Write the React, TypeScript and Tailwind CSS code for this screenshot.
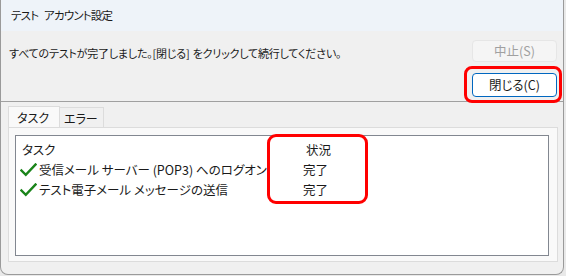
const font = "font-['Segoe_UI','Noto_Sans_CJK_JP',sans-serif] [font-feature-settings:'palt']";

const rows = [
  { task: "受信メール サーバー (POP3) へのログオン", status: "完了" },
  { task: "テスト電子メール メッセージの送信", status: "完了" },
];

function Check() {
  return (
    <svg width="17" height="14" viewBox="0 0 17 14" className="shrink-0">
      <path d="M1.5 7.5 L5.8 11.8 L15.5 1.5" fill="none" stroke="#1a841a" strokeWidth="2.4" strokeLinecap="square" />
    </svg>
  );
}

export default function App() {
  return (
    <div className={`w-[566px] h-[276px] bg-[#e9e9e9] overflow-hidden text-[12px] text-[#1a1a1a] ${font}`}>
      <div className="w-[564px] h-[275px] bg-[#f0f0f0] border border-t-0 border-[#9a9a9a] rounded-b-[8px] flex flex-col">
        <div className="h-[31px] bg-[#eef3f9] flex items-center pl-[10px] text-[11.5px] tracking-[-0.8px] [word-spacing:4px]">テスト アカウント設定</div>

        <div className="flex justify-between pl-[8px] pr-[6px] pt-[9px]">
          <span className="mt-[8px] leading-none text-[11px] tracking-[-0.2px] [word-spacing:1px]">
            すべてのテストが完了しました。[閉じる] をクリックして続行してください。
          </span>
          <div className="flex flex-col gap-[11px]">
            <button className="w-[85px] h-[22px] rounded-[4px] bg-[#f5f5f5] border border-[#e6e6e6] text-[#a0a0a0] text-[12.5px]">
              中止(S)
            </button>
            <div className="relative">
              <button className="w-[85px] h-[24px] rounded-[4px] bg-white border border-[#0067c0] text-[#1a1a1a] text-[12.5px]">
                閉じる(C)
              </button>
              <div className="absolute left-[-8px] top-[-7px] w-[98px] h-[37px] border-[3px] border-[#ff0000] rounded-[8px]" />
            </div>
          </div>
        </div>

        <div className="mt-[4px] border-t border-[#a0a0a0]" />

        <div className="pl-[7px] pr-[6px] pt-[4px]">
          <div className="flex items-end h-[21px]">
            <div className="w-[52px] h-[21px] bg-[#f9f9f9] border border-b-0 border-[#dcdcdc] pl-[8px] pt-[2px]">タスク</div>
            <div className="w-[44px] h-[20px] bg-[#f0f0f0] border border-l-0 border-b-0 border-[#dcdcdc] pl-[4px] pt-[2px]">エラー</div>
          </div>
          <div className="w-[550px] h-[135px] bg-[#f9f9f9] border border-[#dcdcdc] pl-[6px] pr-[8px] pt-[7px] pb-[5px]">
            <div className="relative h-full bg-white border border-[#828790] pl-[6px] pt-[5px] text-[12.5px]">
              <div className="flex h-[19px] items-center">
                <span className="w-[284px]">タスク</span>
                <span>状況</span>
              </div>
              {rows.map((r) => (
                <div key={r.task} className="flex h-[20px] items-center">
                  <div className="w-[284px] flex items-center gap-[2px] -ml-[2px]">
                    <Check />
                    <span>{r.task}</span>
                  </div>
                  <span className="-ml-[1px]">{r.status}</span>
                </div>
              ))}
              <div className="absolute left-[251px] top-[-2px] w-[101px] h-[70px] border-[3px] border-[#ff0000] rounded-[9px]" />
            </div>
          </div>
        </div>
      </div>
    </div>
  );
}
